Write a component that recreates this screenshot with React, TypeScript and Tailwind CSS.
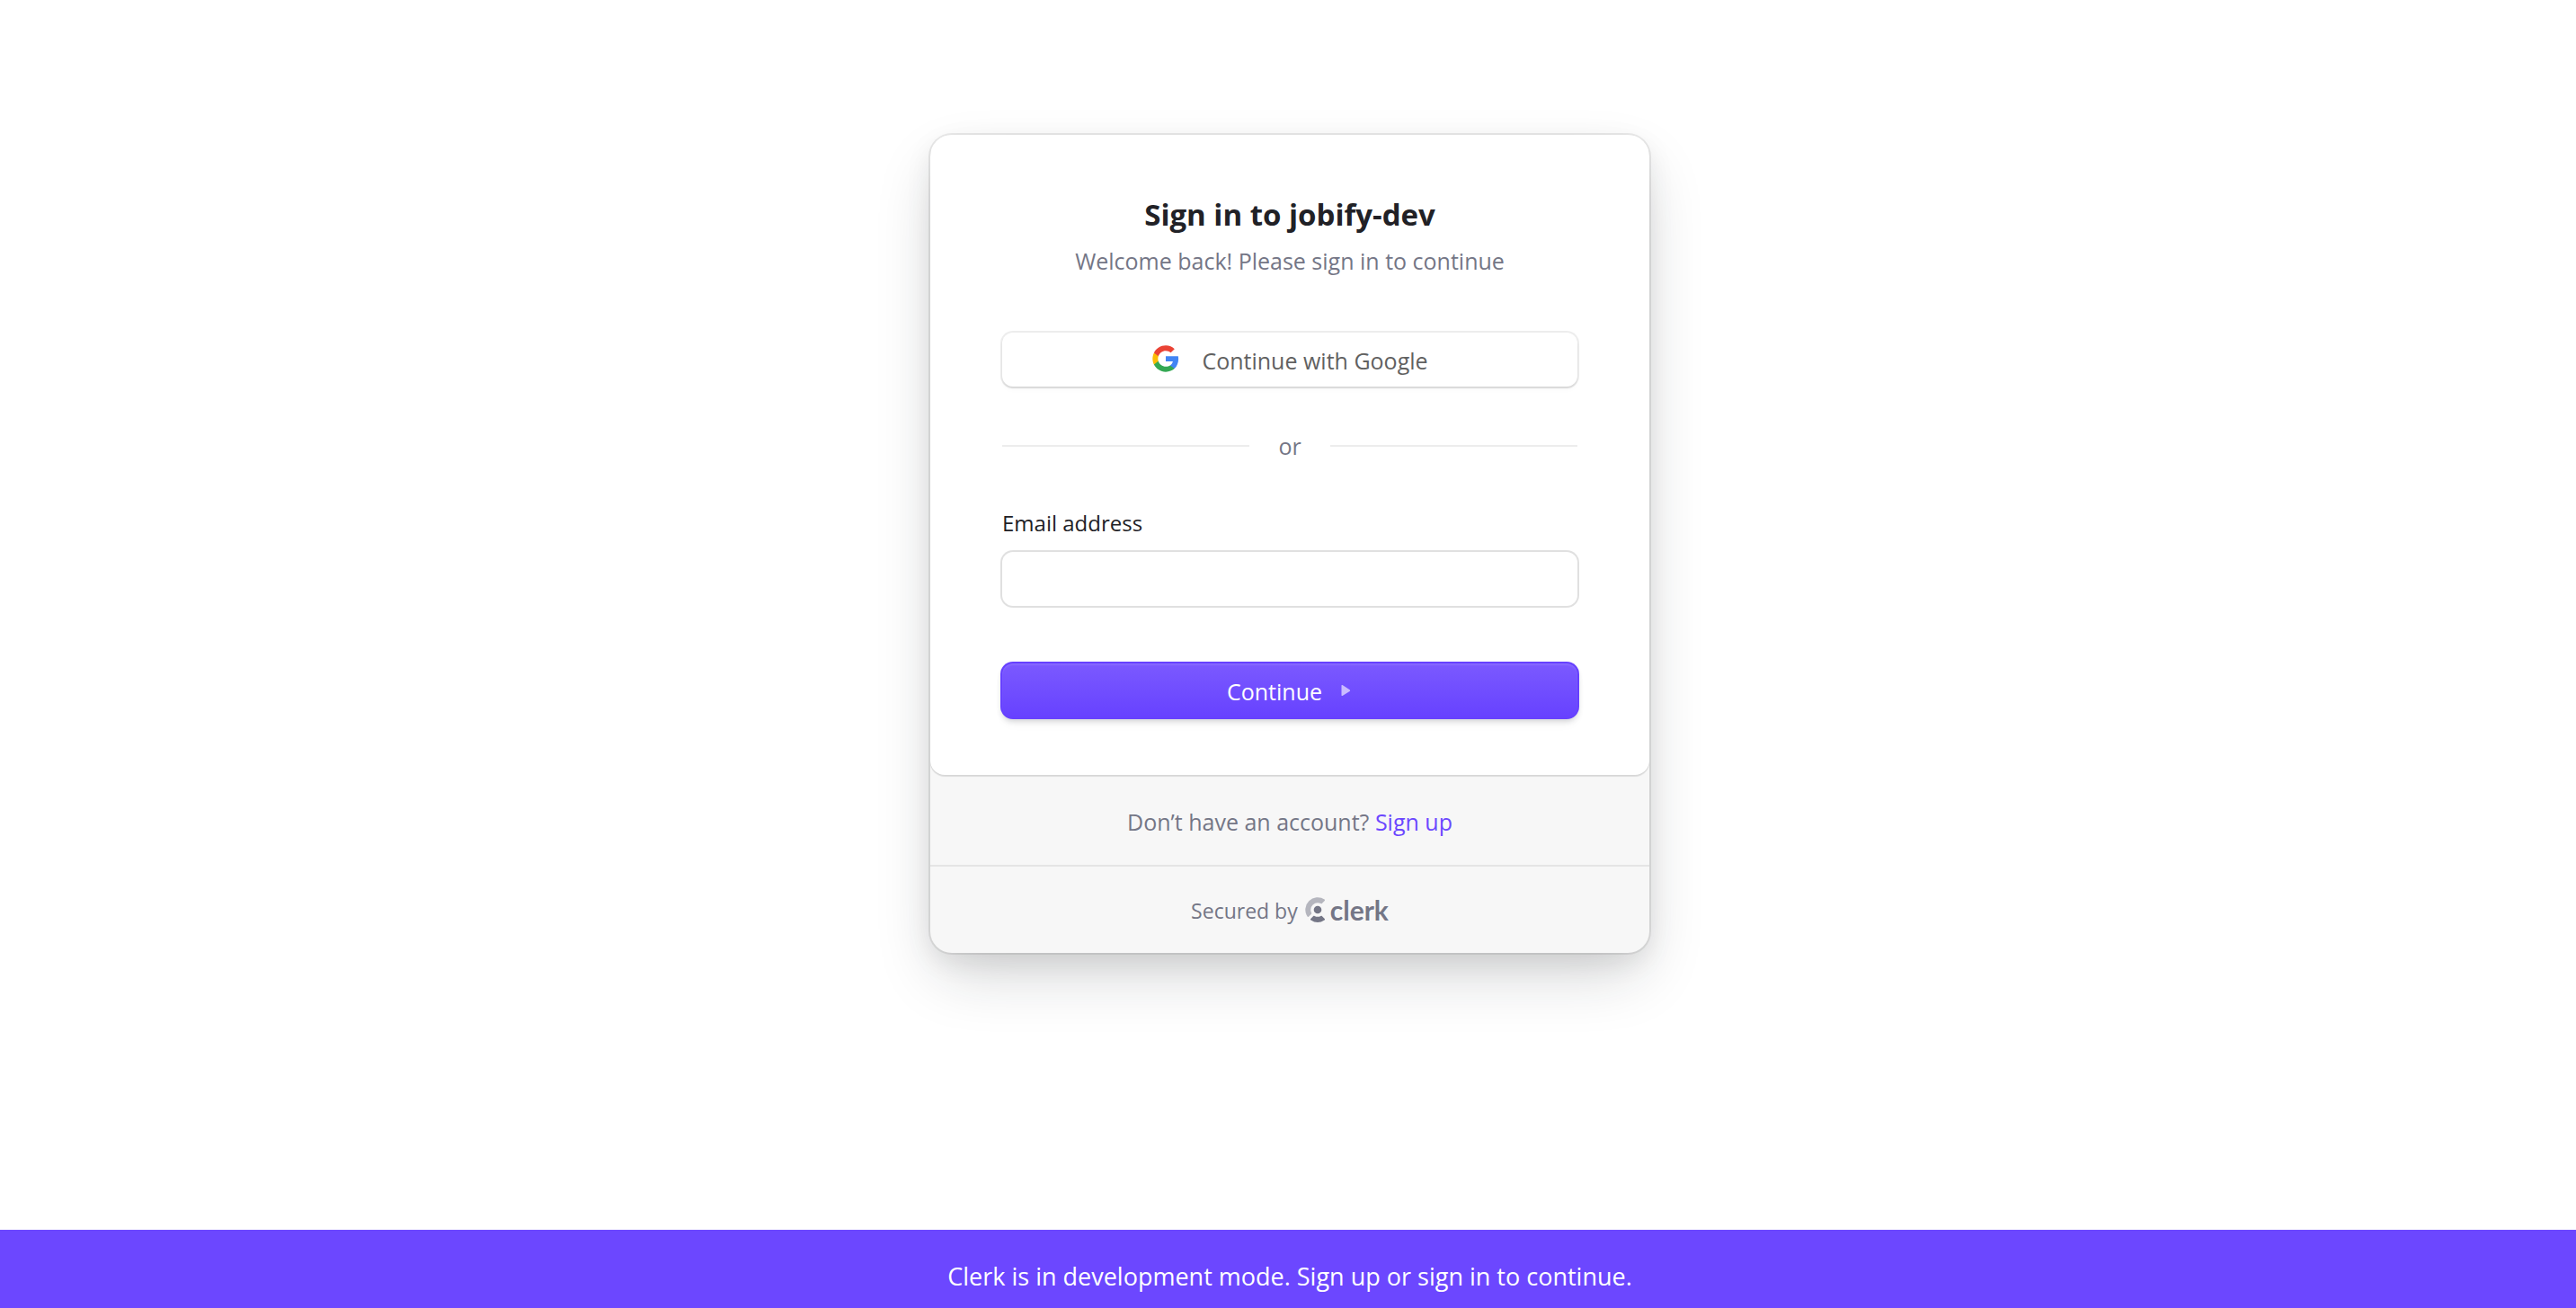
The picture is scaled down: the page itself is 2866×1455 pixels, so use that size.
import React from "react";

function GoogleIcon() {
  return (
    <svg viewBox="0 0 24 24" className="size-8 -translate-y-0.5" aria-hidden="true">
      <path fill="#4285F4" d="M22.56 12.25c0-.78-.07-1.53-.2-2.25H12v4.26h5.92c-.26 1.37-1.04 2.53-2.21 3.31v2.77h3.57c2.08-1.92 3.28-4.74 3.28-8.09z" />
      <path fill="#34A853" d="M12 23c2.97 0 5.46-.98 7.28-2.66l-3.57-2.77c-.98.66-2.23 1.06-3.71 1.06-2.86 0-5.29-1.93-6.16-4.53H2.18v2.84C3.99 20.53 7.7 23 12 23z" />
      <path fill="#FBBC05" d="M5.84 14.09c-.22-.66-.35-1.36-.35-2.09s.13-1.43.35-2.09V7.07H2.18C1.43 8.55 1 10.22 1 12s.43 3.45 1.18 4.93l2.85-2.22.81-.62z" />
      <path fill="#EA4335" d="M12 5.38c1.62 0 3.06.56 4.21 1.64l3.15-3.15C17.45 2.09 14.97 1 12 1 7.7 1 3.99 3.47 2.18 7.07l3.66 2.84c.87-2.6 3.3-4.53 6.16-4.53z" />
    </svg>
  );
}

function ClerkMark() {
  return (
    <svg viewBox="0 0 28 28" className="size-7 text-[#747686]" fill="currentColor" aria-hidden="true">
      <path
        fillOpacity="0.5"
        d="M21.6 2.6c.5.35.55.9.15 1.3l-3 3.05c-.35.35-.8.4-1.25.15A7.8 7.8 0 0 0 7.1 17.5c.25.45.2.9-.15 1.25l-3.05 3c-.4.4-.95.35-1.3-.15A13.7 13.7 0 0 1 21.6 2.6z"
      />
      <circle cx="14" cy="14" r="4.3" />
      <path d="M21.75 24.1c.4.4.35.95-.15 1.3a13.7 13.7 0 0 1-15.2 0c-.5-.35-.55-.9-.15-1.3l3-3.05c.35-.35.8-.4 1.25-.15a7.8 7.8 0 0 0 7 0c.45-.25.9-.2 1.25.15z" />
    </svg>
  );
}

export default function App() {
  return (
    <div className="flex min-h-screen flex-col bg-white font-['Open_Sans','Noto_Sans',sans-serif] text-[25px] leading-9 text-[#747686]">
      <main className="flex flex-1 justify-center pt-[150px] pl-1">
        <div className="w-full max-w-[800px] self-start overflow-hidden rounded-3xl bg-[#f7f7f7] shadow-[0_0_0_2px_rgba(0,0,0,0.08),0_30px_70px_-10px_rgba(25,28,33,0.2),0_10px_30px_0_rgba(0,0,0,0.08)]">
          <section className="rounded-b-2xl bg-white px-20 py-16 shadow-[0_0_2px_0_rgba(0,0,0,0.1),0_2px_1px_0_rgba(0,0,0,0.1)]">
            <header className="flex flex-col gap-2 text-center">
              <h1 className="text-[33px] leading-[50px] font-bold text-[#212126]">Sign in to jobify-dev</h1>
              <p>Welcome back! Please sign in to continue</p>
            </header>

            <button
              type="button"
              className="mt-[62px] flex h-[60px] w-full items-center justify-center gap-6 rounded-xl bg-white pt-0.5 text-[#616161] shadow-[0_0_0_2px_rgba(0,0,0,0.07),0_2px_2px_0_rgba(0,0,0,0.08),0_4px_6px_0_rgba(0,0,0,0.02)]"
            >
              <GoogleIcon />
              <span>Continue with Google</span>
            </button>

            <div className="mt-12 mb-[50px] flex items-center gap-8">
              <span className="h-0.5 flex-1 bg-[#ededed]" />
              <span>or</span>
              <span className="h-0.5 flex-1 bg-[#ededed]" />
            </div>

            <form onSubmit={(event) => event.preventDefault()}>
              <label htmlFor="email" className="block text-2xl leading-9 text-[#212126]">
                Email address
              </label>
              <input
                id="email"
                type="email"
                name="email"
                className="mt-3.5 block h-[60px] w-full rounded-xl bg-white px-6 text-[#212126] shadow-[0_0_0_2px_rgba(0,0,0,0.12)] outline-none"
              />
              <button
                type="submit"
                className="mt-16 flex h-[60px] w-full items-center justify-center gap-5 rounded-xl bg-[#6c47ff] bg-linear-to-b from-[#7b59ff] to-[#6741ff] pt-0.5 text-white shadow-[0_0_0_2px_#6741ff,inset_0_2px_2px_0_rgba(255,255,255,0.1),0_4px_6px_0_rgba(34,42,53,0.2),0_8px_12px_0_rgba(0,0,0,0.03)]"
              >
                Continue
                <svg viewBox="0 0 14 14" className="size-3.5" aria-hidden="true">
                  <path
                    d="M1.5 .8v10.4c0 .8.5 1 1.1.7l8-4.9c.7-.4.7-1.3 0-1.7l-8-5.2c-.6-.4-1.1-.1-1.1.7z"
                    fill="#cabbff"
                  />
                </svg>
              </button>
            </form>
          </section>

          <footer>
            <p className="pt-[34px] pb-[30px] text-center">
              Don’t have an account?{" "}
              <a href="#sign-up" className="text-[#6c47ff]">
                Sign up
              </a>
            </p>
            <div className="flex h-[98px] items-center justify-center gap-2 border-t-2 border-[#e5e5e5] text-[23px]">
              <span className="pt-0.5">Secured by</span>
              <a href="#clerk" className="flex items-center">
                <ClerkMark />
                <span className="font-[Lato,sans-serif] text-[30px] font-bold">clerk</span>
              </a>
            </div>
          </footer>
        </div>
      </main>

      <aside className="bg-[#6c47ff] pt-8 pb-[15px] pl-1 text-center text-[27px] leading-10 text-white">
        Clerk is in development mode. Sign up or sign in to continue.
      </aside>
    </div>
  );
}
